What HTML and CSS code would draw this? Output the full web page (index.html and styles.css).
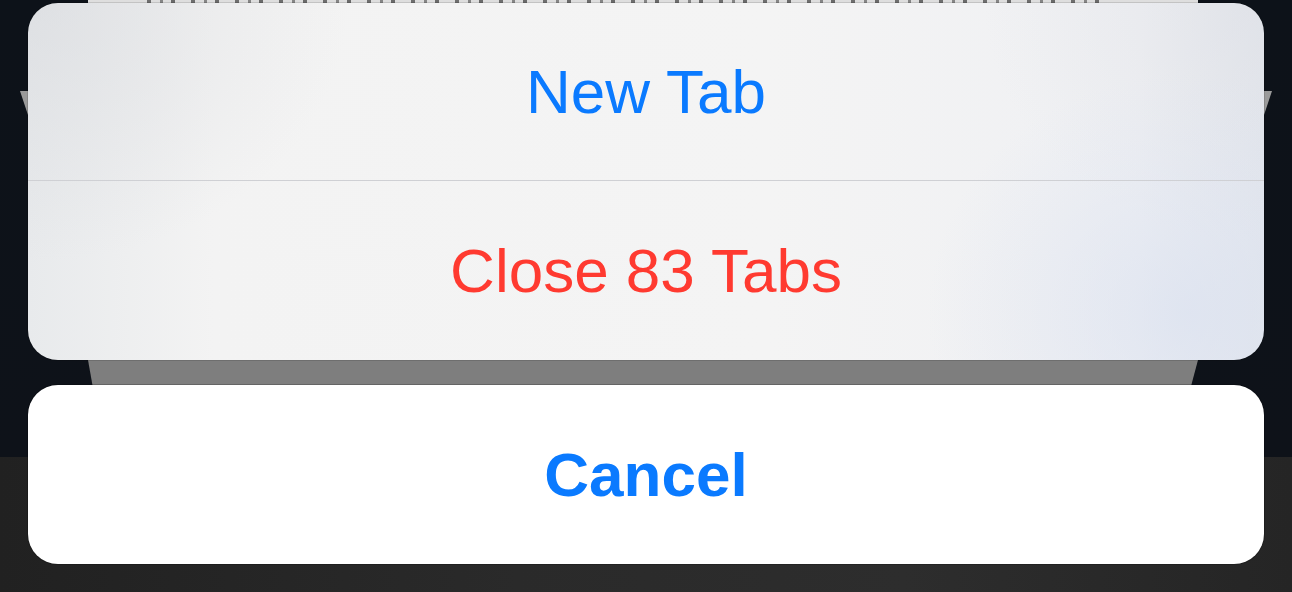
FILE: index.html
```html
<!DOCTYPE html>
<html lang="en">
<head>
<meta charset="utf-8">
<title>Action Sheet</title>
<link rel="stylesheet" href="styles.css">
</head>
<body>
<div class="screen">
  <div class="behind">
    <div class="behind-strip">
      <div class="behind-text"></div>
    </div>
  </div>
  <div class="notch notch-left"></div>
  <div class="notch notch-right"></div>
  <div class="sheet">
    <div class="group">
      <button class="action action-first blue">New Tab</button>
      <div class="divider"></div>
      <button class="action action-second red">Close 83 Tabs</button>
    </div>
    <button class="cancel">Cancel</button>
  </div>
</div>
</body>
</html>
```
FILE: styles.css
```css
html, body {
  margin: 0;
  padding: 0;
}
body {
  width: 1292px;
  height: 592px;
  overflow: hidden;
  font-family: "Liberation Sans", Arial, sans-serif;
  background: #0d1219;
}
.screen {
  position: relative;
  width: 1292px;
  height: 592px;
  background:
    linear-gradient(to bottom, #0d1219 0, #0e1219 457px, transparent 457px),
    linear-gradient(to right, #212121 0, #2a2a2a 40%, #2d2d2d 70%, #252525 100%);
}
.behind {
  position: absolute;
  left: 88px;
  right: 94px;
  top: 0;
  height: 385px;
  background: #7e7e7e;
  clip-path: polygon(0 0, 100% 0, 100% 360px, 99.4% 385px, 0.4% 385px, 0 360px);
}
.behind-strip {
  height: 4px;
  padding: 0 90px 0 52px;
  background: #dedede;
}
.behind-text {
  height: 3px;
  background:
    repeating-linear-gradient(to right, #dedede 0 7px, #6e6e6e 7px 11px, #dedede 11px 20px, #858585 20px 23px, #dedede 23px 31px, #6a6a6a 31px 35px, #dedede 35px 44px);
}
.notch {
  position: absolute;
  top: 91px;
  width: 8px;
  height: 24px;
  background: #9a9a9a;
}
.notch-left {
  left: 20px;
  clip-path: polygon(0 0, 100% 0, 100% 100%);
}
.notch-right {
  left: 1264px;
  clip-path: polygon(0 0, 100% 0, 0 100%);
}
.sheet {
  position: relative;
  display: flex;
  flex-direction: column;
  gap: 25px;
  padding: 3px 28px 0;
}
.group {
  display: flex;
  flex-direction: column;
  border-radius: 30px;
  overflow: hidden;
  background:
    radial-gradient(ellipse 260px 240px at 1160px 310px, rgba(218, 225, 240, 0.7), rgba(218, 225, 240, 0) 100%),
    radial-gradient(ellipse 320px 260px at 0 0, rgba(214, 216, 220, 0.55), rgba(214, 216, 220, 0) 100%),
    radial-gradient(ellipse 280px 240px at 1236px 0, rgba(220, 222, 228, 0.5), rgba(220, 222, 228, 0) 100%),
    linear-gradient(to right, #e8eaec 0, #f3f3f3 15%, #f4f4f4 60%, #eff0f3 90%, #e4e7ed 100%);
  box-shadow: 0 0 0 1px rgba(0, 0, 0, 0.12);
}
.action, .cancel {
  display: flex;
  align-items: center;
  justify-content: center;
  border: 0;
  margin: 0;
  padding: 0;
  font-family: "Liberation Sans", Arial, sans-serif;
  font-size: 62px;
  background: transparent;
  cursor: pointer;
}
.action-first {
  height: 177px;
}
.action-second {
  height: 179px;
}
.divider {
  height: 1px;
  background: #cfd0d4;
}
.blue {
  color: #0a7aff;
}
.red {
  color: #ff3a30;
}
.cancel {
  height: 179px;
  border-radius: 30px;
  background: #ffffff;
  color: #0a7aff;
  font-weight: 700;
  box-shadow: 0 0 0 1px rgba(0, 0, 0, 0.2);
}
```
